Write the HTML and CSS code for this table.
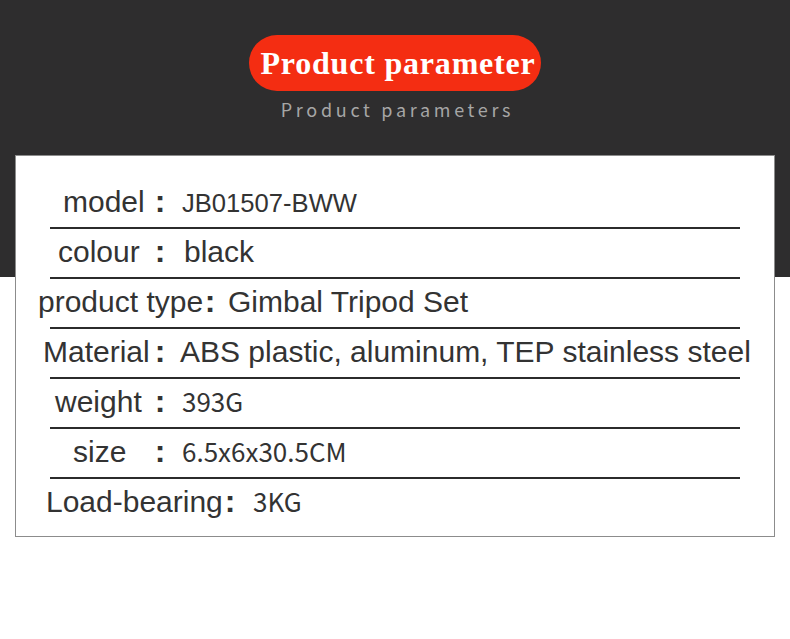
FILE: index.html
```html
<!DOCTYPE html>
<html lang="en">
<head>
<meta charset="utf-8">
<title>Product parameter</title>
<link rel="stylesheet" href="styles.css">
</head>
<body>
<div class="page">
  <header class="hero">
    <div class="pill">Product parameter</div>
    <div class="sub">Product parameters</div>
  </header>
  <section class="card">
    <div class="row r-model"><span class="lbl">model</span><span class="colon">:</span><span class="val v-sm">JB01507-BWW</span></div>
    <div class="rule"></div>
    <div class="row r-colour"><span class="lbl">colour</span><span class="colon">:</span><span class="val">black</span></div>
    <div class="rule"></div>
    <div class="row r-type"><span class="lbl">product type</span><span class="colon">:</span><span class="val">Gimbal Tripod Set</span></div>
    <div class="rule"></div>
    <div class="row r-material"><span class="lbl">Material</span><span class="colon">:</span><span class="val">ABS plastic, aluminum, TEP stainless steel</span></div>
    <div class="rule"></div>
    <div class="row r-weight"><span class="lbl">weight</span><span class="colon">:</span><span class="val v-cjk">393G</span></div>
    <div class="rule"></div>
    <div class="row r-size"><span class="lbl">size</span><span class="colon">:</span><span class="val v-cjk">6.5x6x30.5CM</span></div>
    <div class="rule"></div>
    <div class="row r-load"><span class="lbl">Load-bearing</span><span class="colon">:</span><span class="val v-cjk">3KG</span></div>
  </section>
</div>
</body>
</html>
```
FILE: styles.css
```css
* { box-sizing: border-box; }
html, body { margin: 0; padding: 0; }
body {
  width: 790px;
  height: 639px;
  overflow: hidden;
  background: #ffffff;
  font-family: "Liberation Sans", Arial, sans-serif;
}
.page {
  height: 639px;
  background: linear-gradient(to bottom, #2e2d2e 0, #2e2d2e 277px, #ffffff 277px);
  padding-top: 35px;
}
.hero {
  display: flex;
  flex-direction: column;
  align-items: center;
}
.pill {
  width: 292px;
  height: 56px;
  border-radius: 28px;
  background: #f42d12;
  color: #ffffff;
  font-family: "Liberation Serif", "Times New Roman", serif;
  font-weight: bold;
  font-size: 32px;
  letter-spacing: 0.8px;
  line-height: 56px;
  padding-left: 6px;
  text-align: center;
  white-space: nowrap;
}
.sub {
  margin-top: 6px;
  height: 24px;
  color: #a6a6a6;
  font-family: "Noto Sans CJK SC", "Noto Sans", sans-serif;
  font-size: 18px;
  line-height: 24px;
  letter-spacing: 3.7px;
  padding-left: 5px;
  white-space: nowrap;
}
.card {
  margin: 34px 15px 0;
  height: 382px;
  border: 1px solid #8c8c8c;
  background: #ffffff;
  padding-top: 23px;
  color: #333333;
}
.row {
  height: 48px;
  padding-top: 7px;
  display: flex;
  align-items: baseline;
  white-space: nowrap;
}
.lbl {
  flex: none;
  width: 134px;
  font-size: 30px;
  line-height: 30px;
}
.colon {
  flex: none;
  width: 20px;
  text-align: center;
  font-size: 32px;
  line-height: 30px;
  font-weight: bold;
}
.val {
  font-size: 30px;
  line-height: 30px;
  margin-left: 12px;
}
.v-sm {
  font-size: 25.6px;
}
.v-cjk {
  font-family: "Noto Sans CJK SC", "Noto Sans", sans-serif;
  font-size: 26px;
  line-height: 26px;
}
.rule {
  height: 2px;
  margin: 0 34px;
  background: #2b2b2b;
}
.r-model .lbl { padding-left: 47px; }
.r-colour .lbl { padding-left: 42px; }
.r-colour .val { margin-left: 14px; }
.r-type .lbl { width: 184px; padding-left: 22px; }
.r-type .val { margin-left: 8px; }
.r-material .lbl { padding-left: 27px; }
.r-material .val { margin-left: 10px; }
.r-weight .lbl { padding-left: 39px; }
.r-size .lbl { padding-left: 57px; }
.r-load .lbl { width: 204px; padding-left: 30px; }
.r-load .val { margin-left: 13px; }
```
